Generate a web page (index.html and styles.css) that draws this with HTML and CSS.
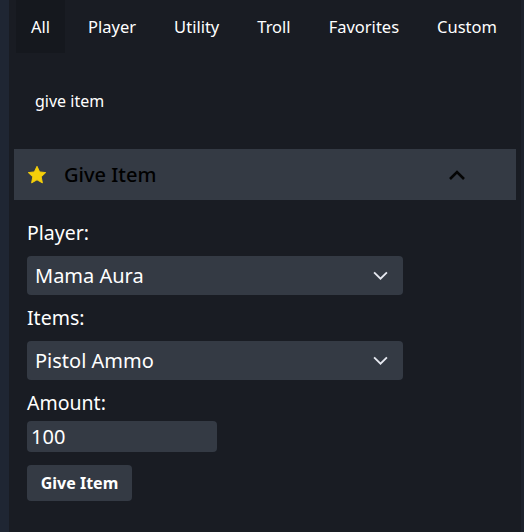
FILE: index.html
```html
<!DOCTYPE html>
<html>
<head>
<meta charset="utf-8">
<link rel="stylesheet" href="styles.css">
</head>
<body>
<div class="app">
  <div class="rail"></div>
  <main class="main">
    <nav class="tabs">
      <span class="tab active">All</span>
      <span class="tab">Player</span>
      <span class="tab">Utility</span>
      <span class="tab">Troll</span>
      <span class="tab">Favorites</span>
      <span class="tab">Custom</span>
    </nav>
    <div class="search">give item</div>
    <section class="panel">
      <div class="panel-head">
        <svg class="star" viewBox="0 0 24 24" width="22" height="22"><path d="M12 2.5l2.9 6.1 6.6.8-4.9 4.6 1.3 6.6L12 17.3l-5.9 3.3 1.3-6.6-4.9-4.6 6.6-.8z" fill="#f5cf0a" stroke="#f5cf0a" stroke-width="1" stroke-linejoin="round"/></svg>
        <span class="panel-title">Give Item</span>
        <svg class="chev-up" viewBox="0 0 18 12" width="18" height="12"><path d="M2 10l7-7 7 7" fill="none" stroke="#050505" stroke-width="2.6"/></svg>
      </div>
      <div class="panel-body">
        <label class="lbl">Player:</label>
        <div class="select"><span>Mama Aura</span><svg viewBox="0 0 18 12" width="17" height="11"><path d="M2 2.5l7 7 7-7" fill="none" stroke="#e6e8f0" stroke-width="2"/></svg></div>
        <label class="lbl">Items:</label>
        <div class="select"><span>Pistol Ammo</span><svg viewBox="0 0 18 12" width="17" height="11"><path d="M2 2.5l7 7 7-7" fill="none" stroke="#e6e8f0" stroke-width="2"/></svg></div>
        <label class="lbl">Amount:</label>
        <div class="input">100</div>
        <button class="btn">Give Item</button>
      </div>
    </section>
  </main>
  <div class="edge"></div>
</div>
</body>
</html>
```
FILE: styles.css
```css
html, body {
  margin: 0;
  padding: 0;
  background: #191c23;
  font-family: "Noto Sans", "Open Sans", sans-serif;
  color: #ffffff;
}
.app {
  display: flex;
  width: 524px;
  height: 532px;
  overflow: hidden;
}
.rail {
  width: 9px;
  flex: none;
  background: #1f2633;
}
.edge {
  width: 3px;
  flex: none;
  background: #1d222c;
}
.main {
  flex: 1;
  padding: 0 5px 0 5px;
  display: flex;
  flex-direction: column;
}
.tabs {
  display: flex;
  height: 53px;
  margin-left: 2px;
  gap: 8px;
}
.tab {
  display: flex;
  align-items: center;
  padding: 0 15px;
  font-size: 16.5px;
  color: #ffffff;
}
.tab.active {
  background: #15181e;
}
.search {
  margin: 37px 0 0 21px;
  height: 22px;
  line-height: 22px;
  font-size: 16px;
}
.panel {
  margin-top: 37px;
}
.panel-head {
  display: flex;
  align-items: center;
  height: 51px;
  background: #343a44;
  padding-left: 12px;
  padding-right: 50px;
}
.star {
  flex: none;
}
.panel-title {
  margin-left: 16px;
  font-size: 20px;
  font-weight: 500;
  color: #000000;
  flex: 1;
}
.chev-up {
  flex: none;
}
.panel-body {
  display: flex;
  flex-direction: column;
  align-items: flex-start;
  padding: 21px 13px 0 13px;
}
.lbl {
  font-size: 19.5px;
  line-height: 24px;
  height: 24px;
  margin-bottom: 11px;
}
.select {
  box-sizing: border-box;
  width: 376px;
  height: 39px;
  background: #343a44;
  border-radius: 4px;
  display: flex;
  align-items: center;
  justify-content: space-between;
  padding: 0 14px 0 8px;
  font-size: 20px;
  margin-bottom: 11px;
}
.input {
  box-sizing: border-box;
  width: 190px;
  height: 31px;
  background: #343a44;
  border-radius: 4px;
  padding-left: 4px;
  font-size: 20px;
  line-height: 31px;
  margin-top: -5px;
}
.btn {
  margin-top: 13px;
  box-sizing: border-box;
  width: 105px;
  height: 36px;
  border: none;
  border-radius: 4px;
  background: #343a44;
  color: #ffffff;
  font-family: inherit;
  font-weight: 700;
  font-size: 16px;
  padding: 0;
}
```
